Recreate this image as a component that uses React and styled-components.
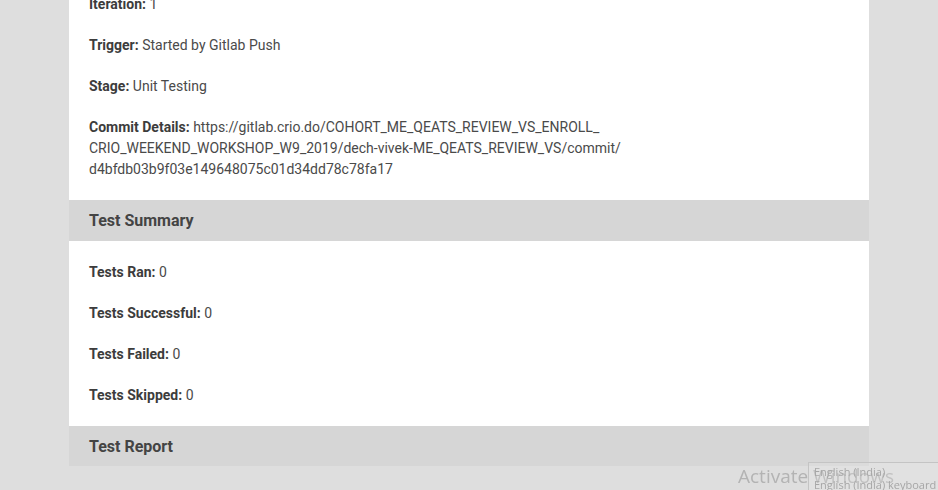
import styled, { createGlobalStyle } from "styled-components";

const GlobalStyle = createGlobalStyle`
  html, body {
    margin: 0;
    padding: 0;
    background: #dedede;
    overflow: hidden;
  }
  body {
    font-family: Roboto, "Liberation Sans", sans-serif;
    color: #444;
  }
`;

const Page = styled.main`
  width: 800px;
  margin: -26px 0 0 69px;
`;

const Section = styled.section`
  display: flow-root;
  background: #fff;
  padding: ${({ $top }) => $top || 20}px 20px 0;
`;

const Row = styled.p`
  margin: 0 0 20px;
  font-size: 14px;
  line-height: 21px;
  color: #4a4a4a;
  max-width: 540px;
`;

const Label = styled.b`
  font-weight: 700;
  color: #3c3c3c;
`;

const Header = styled.h3`
  margin: 0;
  height: ${({ $h }) => $h || 41}px;
  display: flex;
  align-items: center;
  padding: 0 20px;
  background: #d6d6d6;
  font-size: 16px;
  font-weight: 700;
  color: #444;
`;

const Watermark = styled.div`
  position: fixed;
  left: 738px;
  top: 463px;
  font-family: "Open Sans", "Liberation Sans", sans-serif;
  font-size: 19px;
  color: #b3b3b3;
  white-space: nowrap;
  pointer-events: none;
`;

const LangTip = styled.div`
  position: fixed;
  left: 808px;
  top: 462px;
  width: 140px;
  height: 40px;
  background: rgba(236, 236, 236, 0.25);
  border: 1px solid #c4c4c4;
  padding: 2px 0 0 5px;
  font-family: "Open Sans", "Liberation Sans", sans-serif;
  font-size: 11px;
  line-height: 13px;
  color: #a6a6a6;
  white-space: nowrap;
`;

const details = [
  ["Iteration:", "1"],
  ["Trigger:", "Started by Gitlab Push"],
  ["Stage:", "Unit Testing"],
];

const summary = [
  ["Tests Ran:", "0"],
  ["Tests Successful:", "0"],
  ["Tests Failed:", "0"],
  ["Tests Skipped:", "0"],
];

export default function App() {
  return (
    <>
      <GlobalStyle />
      <Page>
        <Section>
          {details.map(([k, v]) => (
            <Row key={k}>
              <Label>{k}</Label> {v}
            </Row>
          ))}
          <Row>
            <Label>Commit Details:</Label> https://gitlab.crio.do/COHORT_ME_QEATS_REVIEW_VS_ENROLL_
            <br />
            CRIO_WEEKEND_WORKSHOP_W9_2019/dech-vivek-ME_QEATS_REVIEW_VS/commit/
            <br />
            d4bfdb03b9f03e149648075c01d34dd78c78fa17
          </Row>
        </Section>
        <Header>Test Summary</Header>
        <Section $top={21}>
          {summary.map(([k, v]) => (
            <Row key={k}>
              <Label>{k}</Label> {v}
            </Row>
          ))}
        </Section>
        <Header $h={40}>Test Report</Header>
      </Page>
      <Watermark>Activate Windows</Watermark>
      <LangTip>
        English (India)
        <br />
        English (India) keyboard
      </LangTip>
    </>
  );
}
